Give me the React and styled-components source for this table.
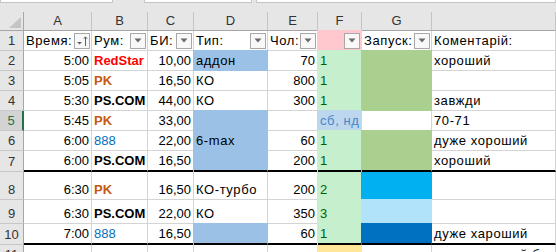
import React from 'react';
import styled, { createGlobalStyle } from 'styled-components';

const GlobalStyle = createGlobalStyle`
  * { box-sizing: border-box; }
  html, body { margin: 0; padding: 0; background: #fff; }
  body { font-family: 'Liberation Sans', Arial, sans-serif; }
`;

const FILL = {
    type: '#9bc2e6',
    mint: '#c6efce',
    leaf: '#a9d08e',
    sky: '#00b0f0',
    ice: '#b1e3fb',
    navy: '#0070c0',
    sand: '#ffe699',
    rose: '#ffc7ce',
    pale: '#bdd7ee',
};

const ROOM_COLORS = {
    RedStar: { color: '#ff0000', bold: true },
    PK: { color: '#c65911', bold: true },
    'PS.COM': { color: '#000', bold: true },
    '888': { color: '#0070c0', bold: false },
};

const Window = styled.div`
    width: 556px;
    height: 252px;
    overflow: hidden;
    background: #e6e6e6;
`;

const FormulaStrip = styled.div`
    display: flex;
    align-items: flex-start;
    height: 12px;
`;

const FieldBox = styled.div`
    height: 3px;
    width: ${p => p.$width ? `${p.$width}px` : 'auto'};
    flex: ${p => p.$width ? 'none' : '1'};
    margin-left: ${p => p.$offset || 0}px;
    background: #fff;
    border: 1px solid #c6c6c6;
    border-top: none;
`;

const Sheet = styled.div`
    display: grid;
    grid-template-columns: 24px 68px 56px 46px 74px 50px 44px 70px 1fr;
    grid-template-rows: 19px 20px repeat(5, 20px) 21px 28px 24px 21px 20px;
    background: #fff;
    font-size: 13px;
    line-height: 16px;
`;

const Corner = styled.div`
    display: flex;
    align-items: flex-end;
    justify-content: flex-end;
    padding: 0 2px 2px 0;
    background: #e6e6e6;
    border-right: 1px solid #a6a6a6;
    border-bottom: 1px solid #a6a6a6;
`;

const ColHead = styled.div`
    display: flex;
    align-items: center;
    justify-content: center;
    background: #e6e6e6;
    color: #333;
    border-right: 1px solid #c4c4c4;
    border-bottom: 1px solid #a6a6a6;
`;

const RowHead = styled.div`
    display: flex;
    align-items: flex-end;
    justify-content: center;
    padding-bottom: 1px;
    background: ${p => p.$active ? '#d3d3d3' : '#e6e6e6'};
    color: ${p => p.$active ? '#217346' : '#333'};
    border-right: ${p => p.$active ? '2px solid #217346' : '1px solid #a6a6a6'};
    border-bottom: 1px solid #c8c8c8;
`;

const Cell = styled.div`
    display: flex;
    align-items: ${p => p.$head ? 'center' : 'flex-end'};
    justify-content: ${p => p.$num ? 'flex-end' : 'flex-start'};
    padding: ${p => p.$head ? '0 1px 0 2px' : '0 2px 1px 2px'};
    overflow: hidden;
    white-space: nowrap;
    letter-spacing: ${p => p.$text ? '0.6px' : 'normal'};
    color: ${p => p.$color || '#000'};
    background: ${p => p.$fill || 'transparent'};
    border-right: 1px solid ${p => p.$fill || '#d4d4d4'};
    border-bottom: ${p => p.$thick ? '2px solid #000' : `1px solid ${p.$fill || '#d4d4d4'}`};
    box-shadow: ${p => {
        if (!p.$fill) return 'none';
        if (p.$afterThick) return `-1px 0 0 ${p.$fill}`;
        return `-1px 0 0 ${p.$fill}, 0 -1px 0 ${p.$fill}, -1px -1px 0 ${p.$fill}`;
    }};
`;

const Room = styled.span`
    color: ${p => ROOM_COLORS[p.$name].color};
    font-weight: ${p => ROOM_COLORS[p.$name].bold ? 700 : 400};
`;

const FilterButton = styled.span`
    margin-left: auto;
    flex: none;
    width: 16px;
    height: 16px;
    display: flex;
    align-items: center;
    justify-content: center;
    background: #f8f8f8;
    border: 1px solid #a8a8a8;
`;

const Filter = ({ sorted }) => (
    <FilterButton>
        {sorted ? (
            <svg width="12" height="12" viewBox="0 0 12 12">
                <path d="M1 7h5l-2.5 2.5z" fill="#606060" />
                <path d="M9.5 11V2M7.8 3.8L9.5 1.8l1.7 2" stroke="#606060" strokeWidth="1" fill="none" />
            </svg>
        ) : (
            <svg width="8" height="5" viewBox="0 0 8 5">
                <path d="M0.5 0.5h7L4 4.5z" fill="#6a6a6a" />
            </svg>
        )}
    </FilterButton>
);

const columns = ['A', 'B', 'C', 'D', 'E', 'F', 'G', ''];

const rows = [
    { n: 2, time: '5:00', room: 'RedStar', buyin: '10,00', type: 'аддон', typeFill: true, players: '70', starts: '1', launch: FILL.leaf, note: 'хороший' },
    { n: 3, time: '5:05', room: 'PK', buyin: '16,50', type: 'КО', players: '800', starts: '1', launch: FILL.leaf },
    { n: 4, time: '5:30', room: 'PS.COM', buyin: '44,00', type: 'КО', players: '300', starts: '1', launch: FILL.leaf, note: 'завжди' },
    { n: 5, time: '5:45', room: 'PK', buyin: '33,00', typeFill: true, days: 'сб, нд', note: '70-71', active: true },
    { n: 6, time: '6:00', room: '888', buyin: '22,00', type: '6-max', typeFill: true, players: '60', starts: '1', launch: FILL.leaf, note: 'дуже хороший' },
    { n: 7, time: '6:00', room: 'PS.COM', buyin: '16,50', typeFill: true, players: '200', starts: '1', launch: FILL.leaf, note: 'хороший', thick: true },
    { n: 8, time: '6:30', room: 'PK', buyin: '16,50', type: 'КО-турбо', players: '200', starts: '2', launch: FILL.sky, afterThick: true },
    { n: 9, time: '6:30', room: 'PS.COM', buyin: '22,00', type: 'КО', players: '350', starts: '3', launch: FILL.ice },
    { n: 10, time: '7:00', room: '888', buyin: '16,50', typeFill: true, players: '60', starts: '1', launch: FILL.navy, note: 'дуже хароший', thick: true },
    { n: 11, startsFill: FILL.sand, note: 'дуже хороший бонус', afterThick: true },
];

const SheetRow = ({ row }) => {
    const line = { $thick: row.thick, $afterThick: row.afterThick };
    const startsFill = row.startsFill || (row.days ? FILL.pale : FILL.mint);
    return (
        <>
            <RowHead $active={row.active}>{row.n}</RowHead>
            <Cell $num {...line}>{row.time}</Cell>
            <Cell {...line}>{row.room && <Room $name={row.room}>{row.room}</Room>}</Cell>
            <Cell $num {...line}>{row.buyin}</Cell>
            <Cell $text $fill={row.typeFill ? FILL.type : null} {...line}>{row.type}</Cell>
            <Cell $num {...line}>{row.players}</Cell>
            <Cell $text $fill={startsFill} $color={row.days ? '#4a86c8' : '#006100'} {...line}>
                {row.days || row.starts}
            </Cell>
            <Cell $fill={row.launch} {...line} />
            <Cell $text {...line}>{row.note}</Cell>
        </>
    );
};

const App = () => {
    return (
        <>
            <GlobalStyle />
            <Window>
                <FormulaStrip>
                    <FieldBox $width={113} />
                    <FieldBox $width={108} $offset={31} />
                    <FieldBox $offset={4} />
                </FormulaStrip>
                <Sheet>
                    <Corner>
                        <svg width="12" height="11" viewBox="0 0 12 11">
                            <path d="M12 0V11H0z" fill="#c4c4c4" />
                        </svg>
                    </Corner>
                    {columns.map((c, i) => <ColHead key={i}>{c}</ColHead>)}

                    <RowHead>1</RowHead>
                    <Cell $head $text>Время:<Filter sorted /></Cell>
                    <Cell $head $text>Рум:<Filter /></Cell>
                    <Cell $head $text>БИ:<Filter /></Cell>
                    <Cell $head $text>Тип:<Filter /></Cell>
                    <Cell $head $text>Чол:<Filter /></Cell>
                    <Cell $head $fill={FILL.rose}><Filter /></Cell>
                    <Cell $head $text>Запуск:<Filter /></Cell>
                    <Cell $head $text>Коментарій:</Cell>

                    {rows.map(row => <SheetRow key={row.n} row={row} />)}
                </Sheet>
            </Window>
        </>
    );
};

export default App;
